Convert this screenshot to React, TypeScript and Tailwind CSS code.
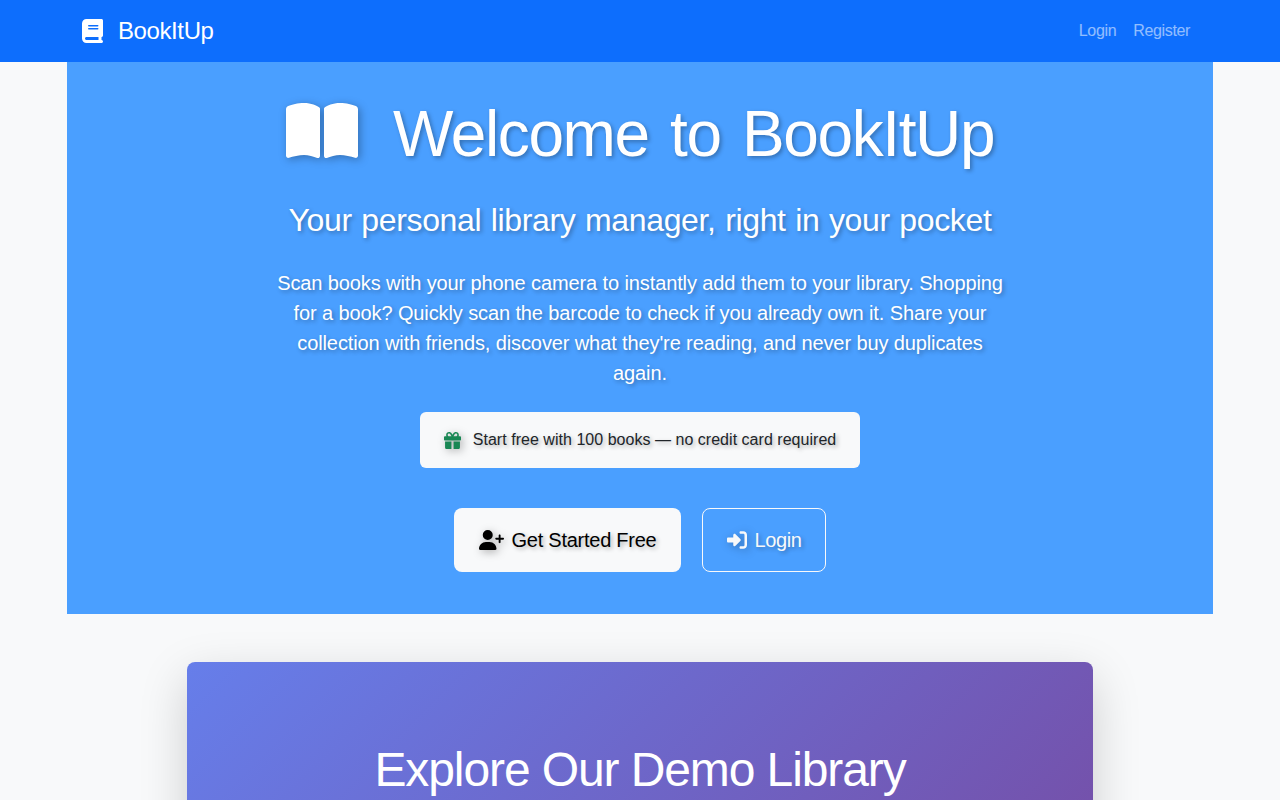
import { FaBook, FaBookOpen, FaGift, FaUserPlus, FaRightToBracket } from 'react-icons/fa6'

export default function App() {
  return (
    <div className="h-[800px] overflow-hidden bg-[#f8f9fa] font-['Liberation_Sans',sans-serif] text-base text-[#212529]">
      {/* Navbar */}
      <nav className="h-[62px] bg-[#0d6efd]">
        <div className="mx-auto flex h-full w-[1140px] items-center justify-between px-3">
          <a className="flex items-center text-white">
            <FaBook className="mr-[15px] h-6 w-[21px]" />
            <span className="text-[24px] leading-none tracking-[-0.4px]">BookItUp</span>
          </a>
          <div className="flex gap-[17px] pr-2 text-base tracking-[-0.35px] text-white/55">
            <a>Login</a>
            <a>Register</a>
          </div>
        </div>
      </nav>

      {/* Hero */}
      <section className="mx-auto h-[552px] w-[1146px] bg-[#4a9fff] pt-[34px] text-center text-white [text-shadow:2px_2px_4px_rgba(0,0,0,0.3)]">
        <h1 className="flex items-center justify-center text-[64px] leading-[77px] tracking-[-1.4px] [word-spacing:5px]">
          <FaBookOpen className="mr-[35px] mb-[7px] h-16 w-[72px] drop-shadow-[2px_2px_4px_rgba(0,0,0,0.3)]" />
          Welcome to BookItUp
        </h1>
        <p className="mt-[28px] text-[32px] leading-[38px] tracking-[-0.35px] [word-spacing:1px]">Your personal library manager, right in your pocket</p>
        <p className="mx-auto mt-[29px] w-[744px] text-[20px] leading-[30px] tracking-[-0.11px]">
          Scan books with your phone camera to instantly add them to your library. Shopping for a book? Quickly scan the barcode to check if you already own it. Share your collection with friends, discover what they're reading, and never buy duplicates again.
        </p>
        <div className="mx-auto mt-[24px] flex h-[56px] w-[440px] items-center justify-center rounded-md bg-[#f8f9fa] text-base tracking-[0.03px] text-[#212529]">
          <FaGift className="mr-[12px] h-[17px] w-[17px] text-[#198754] drop-shadow-[2px_2px_4px_rgba(0,0,0,0.3)]" />
          Start free with 100 books — no credit card required
        </div>
        <div className="mt-[40px] flex justify-center gap-[21px]">
          <a className="flex h-[64px] w-[227px] items-center justify-center rounded-lg bg-[#f8f9fa] text-[20px] tracking-[-0.25px] text-black">
            <FaUserPlus className="mr-[8px] h-5 w-[25px] drop-shadow-[2px_2px_4px_rgba(0,0,0,0.3)]" />
            Get Started Free
          </a>
          <a className="flex h-[64px] w-[124px] items-center justify-center rounded-lg border border-[#f8f9fa] text-[20px] tracking-[-0.4px] text-[#f8f9fa]">
            <FaRightToBracket className="mr-[8px] h-5 w-5 drop-shadow-[2px_2px_4px_rgba(0,0,0,0.3)]" />
            Login
          </a>
        </div>
      </section>

      {/* Demo */}
      <section className="mx-auto mt-[48px] h-[300px] w-[906px] rounded-lg bg-[linear-gradient(135deg,#667eea,#764ba2)] pt-[78px] text-center text-white shadow-[0_16px_48px_rgba(0,0,0,0.175)]">
        <h2 className="text-[48px] leading-[60px] tracking-[-1.1px]">Explore Our Demo Library</h2>
      </section>
    </div>
  )
}
